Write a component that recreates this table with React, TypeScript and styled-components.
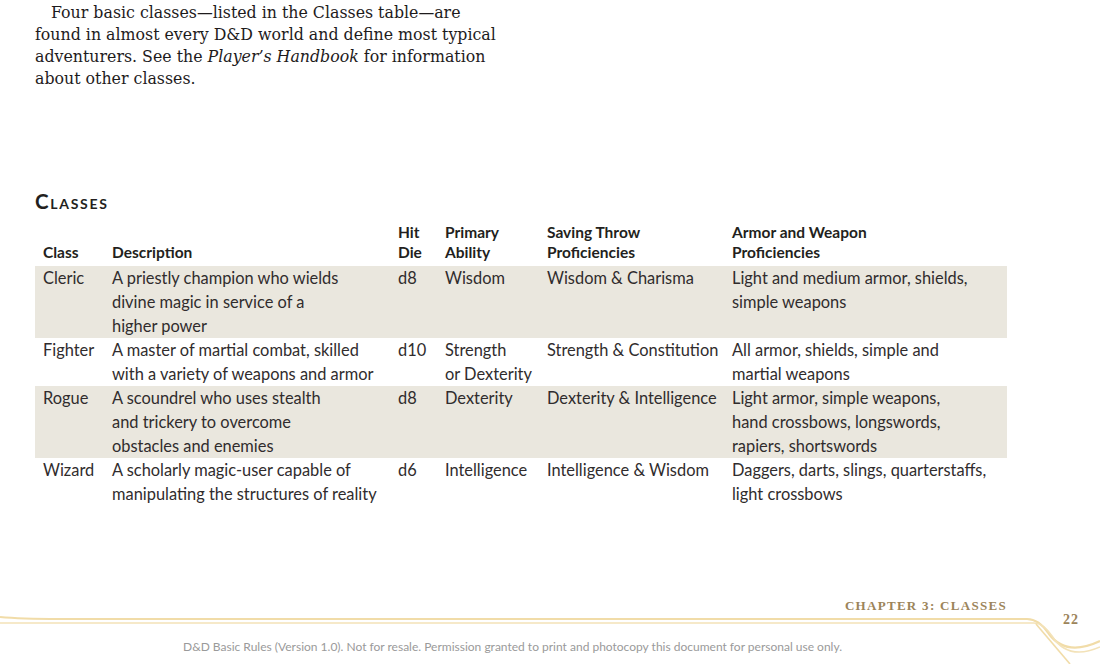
import React from "react";
import styled, { createGlobalStyle } from "styled-components";

const GlobalStyle = createGlobalStyle`
  html, body { margin: 0; padding: 0; background: #ffffff; }
  body { width: 1100px; height: 664px; overflow: hidden; }
`;

const Page = styled.div`
  position: relative;
  width: 1100px;
  height: 664px;
  display: flex;
  flex-direction: column;
  color: #231f20;
`;

const Column = styled.main`
  padding: 2px 0 0 35px;
  width: 972px;
  display: flex;
  flex-direction: column;
`;

const Intro = styled.p`
  margin: 0;
  width: 500px;
  font-family: "DejaVu Serif", "Liberation Serif", serif;
  font-size: 15.8px;
  line-height: 22px;
  text-indent: 16px;
  white-space: nowrap;
  color: #1e1b1c;
  em { font-style: italic; }
`;

const Heading = styled.h2`
  margin: 100px 0 0 0;
  font-family: Lato, "Open Sans", sans-serif;
  font-weight: 700;
  font-size: 20.5px;
  line-height: 22px;
  font-variant: small-caps;
  letter-spacing: 1.7px;
  color: #231f20;
`;

const Table = styled.table`
  margin-top: 10px;
  width: 972px;
  table-layout: fixed;
  border-collapse: collapse;
  font-family: Lato, "Open Sans", sans-serif;
  font-size: 16.4px;
  color: #302c2d;
`;

const HeadCell = styled.th`
  text-align: left;
  vertical-align: bottom;
  font-weight: 700;
  font-size: 15.5px;
  line-height: 20px;
  padding: 0 8px 4px 8px;
  color: #231f20;
`;

const Row = styled.tr<{ $shaded: boolean }>`
  background: ${(p) => (p.$shaded ? "#eae7de" : "transparent")};
`;

const Cell = styled.td`
  vertical-align: top;
  line-height: 24px;
  padding: 0 8px;
  white-space: nowrap;
`;

const Footer = styled.footer`
  position: relative;
  margin-top: auto;
  height: 74px;
  display: flex;
  flex-direction: column;
`;

const Ornament = styled.svg`
  position: absolute;
  left: 0;
  top: 0;
  width: 1100px;
  height: 74px;
`;

const ChapterLabel = styled.div`
  position: relative;
  margin-top: 9px;
  padding-right: 93px;
  text-align: right;
  font-family: "Liberation Serif", "DejaVu Serif", serif;
  font-weight: 700;
  font-size: 13px;
  line-height: 14px;
  letter-spacing: 1.3px;
  color: #9c845a;
`;

const PageNumber = styled.div`
  position: relative;
  margin-top: -1px;
  padding-right: 21px;
  text-align: right;
  font-family: "Liberation Serif", "DejaVu Serif", serif;
  font-weight: 700;
  font-size: 14px;
  line-height: 16px;
  letter-spacing: 1px;
  color: #9c845a;
`;

const Legal = styled.div`
  position: relative;
  margin-top: 12px;
  padding-left: 183px;
  font-family: Lato, "Open Sans", sans-serif;
  font-size: 12px;
  line-height: 14px;
  color: #9a9a9a;
`;

type ClassRow = {
  name: string;
  desc: string[];
  die: string;
  ability: string[];
  saves: string;
  prof: string[];
};

const rows: ClassRow[] = [
  {
    name: "Cleric",
    desc: ["A priestly champion who wields", "divine magic in service of a", "higher power"],
    die: "d8",
    ability: ["Wisdom"],
    saves: "Wisdom & Charisma",
    prof: ["Light and medium armor, shields,", "simple weapons"],
  },
  {
    name: "Fighter",
    desc: ["A master of martial combat, skilled", "with a variety of weapons and armor"],
    die: "d10",
    ability: ["Strength", "or Dexterity"],
    saves: "Strength & Constitution",
    prof: ["All armor, shields, simple and", "martial weapons"],
  },
  {
    name: "Rogue",
    desc: ["A scoundrel who uses stealth", "and trickery to overcome", "obstacles and enemies"],
    die: "d8",
    ability: ["Dexterity"],
    saves: "Dexterity & Intelligence",
    prof: ["Light armor, simple weapons,", "hand crossbows, longswords,", "rapiers, shortswords"],
  },
  {
    name: "Wizard",
    desc: ["A scholarly magic-user capable of", "manipulating the structures of reality"],
    die: "d6",
    ability: ["Intelligence"],
    saves: "Intelligence & Wisdom",
    prof: ["Daggers, darts, slings, quarterstaffs,", "light crossbows"],
  },
];

const Lines = ({ lines }: { lines: string[] }) => (
  <>
    {lines.map((l, i) => (
      <React.Fragment key={i}>
        {i > 0 && <br />}
        {l}
      </React.Fragment>
    ))}
  </>
);

export default function App() {
  return (
    <Page>
      <GlobalStyle />
      <Column>
        <Intro>
          Four basic classes—listed in the Classes table—are
          <br />
          found in almost every D&amp;D world and define most typical
          <br />
          adventurers. See the <em>Player’s Handbook</em> for information
          <br />
          about other classes.
        </Intro>
        <Heading>Classes</Heading>
        <Table>
          <colgroup>
            <col style={{ width: 69 }} />
            <col style={{ width: 286 }} />
            <col style={{ width: 47 }} />
            <col style={{ width: 102 }} />
            <col style={{ width: 185 }} />
            <col style={{ width: 283 }} />
          </colgroup>
          <thead>
            <tr>
              <HeadCell>Class</HeadCell>
              <HeadCell>Description</HeadCell>
              <HeadCell>Hit<br />Die</HeadCell>
              <HeadCell>Primary<br />Ability</HeadCell>
              <HeadCell>Saving Throw<br />Proficiencies</HeadCell>
              <HeadCell>Armor and Weapon<br />Proficiencies</HeadCell>
            </tr>
          </thead>
          <tbody>
            {rows.map((r, i) => (
              <Row key={r.name} $shaded={i % 2 === 0}>
                <Cell>{r.name}</Cell>
                <Cell><Lines lines={r.desc} /></Cell>
                <Cell>{r.die}</Cell>
                <Cell><Lines lines={r.ability} /></Cell>
                <Cell>{r.saves}</Cell>
                <Cell><Lines lines={r.prof} /></Cell>
              </Row>
            ))}
          </tbody>
        </Table>
      </Column>
      <Footer>
        <Ornament viewBox="0 590 1100 74" aria-hidden="true">
          <path d="M0,617 Q20,619 60,619 L1027,619 Q1039,619 1049,634 Q1066,657 1100,641" fill="none" stroke="#f1dca8" strokeWidth="2.2" />
          <path d="M0,623 L1034,623 Q1043,623 1052,636 Q1068,661 1100,647" fill="none" stroke="#f3e2b8" strokeWidth="1.6" />
          <path d="M1036,624 L1070,664" fill="none" stroke="#f1dca8" strokeWidth="1.6" />
        </Ornament>
        <ChapterLabel>CHAPTER 3: CLASSES</ChapterLabel>
        <PageNumber>22</PageNumber>
        <Legal>
          D&amp;D Basic Rules (Version 1.0). Not for resale. Permission granted to print and photocopy this document for personal use only.
        </Legal>
      </Footer>
    </Page>
  );
}
